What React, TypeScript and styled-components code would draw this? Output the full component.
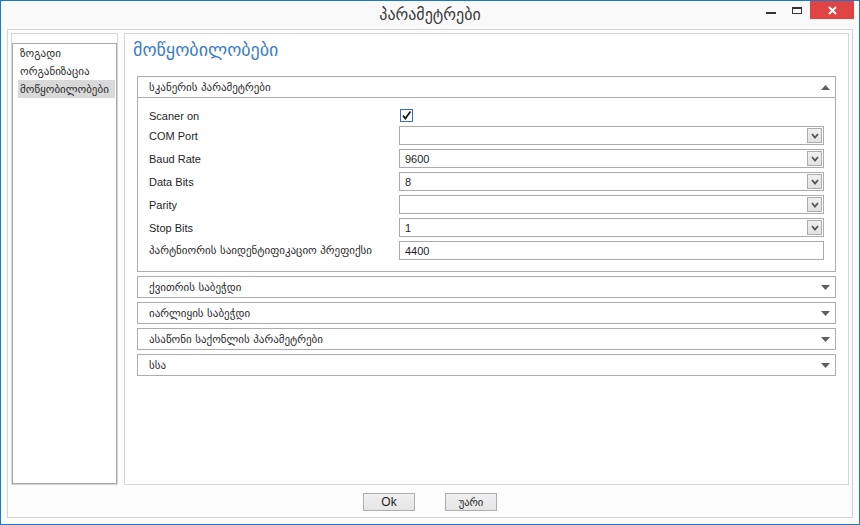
import { Fragment } from "react";
import styled, { createGlobalStyle } from "styled-components";

const GlobalStyle = createGlobalStyle`
  html, body {
    margin: 0;
    padding: 0;
    background: #ffffff;
  }
  body {
    font-family: "Liberation Sans", "DejaVu Sans", sans-serif;
    font-size: 11px;
    color: #1e1e1e;
  }
  * {
    box-sizing: border-box;
  }
`;

const Window = styled.div`
  width: 860px;
  height: 525px;
  display: flex;
  flex-direction: column;
  border: 1px solid #1c79c9;
  background: #fbfbfc;
`;

const TitleBar = styled.div`
  flex: none;
  height: 28px;
  display: grid;
  grid-template-columns: 1fr auto 1fr;
  align-items: start;
  background: #f9f9f9;
`;

const TitleText = styled.div`
  grid-column: 2;
  padding-top: 4px;
  font-family: "DejaVu Sans", sans-serif;
  font-size: 16px;
  color: #3a3a3a;
`;

const Controls = styled.div`
  grid-column: 3;
  justify-self: end;
  display: flex;
  padding-right: 5px;
`;

const ControlButton = styled.div<{ $close?: boolean }>`
  width: ${({ $close }) => ($close ? "44px" : "26px")};
  height: 18px;
  display: flex;
  align-items: center;
  justify-content: center;
  background: ${({ $close }) => ($close ? "#e04343" : "transparent")};
`;

const Frame = styled.div`
  flex: 1;
  display: flex;
  flex-direction: column;
  margin: 0 6px 6px;
  padding: 3px 3px 0;
  border: 1px solid #d5d5d5;
  background: #fdfdfd;
`;

const Panels = styled.div`
  flex: none;
  height: 452px;
  display: flex;
  gap: 6px;
`;

const SidePanel = styled.div`
  width: 107px;
  display: flex;
  flex-direction: column;
  padding-top: 9px;
  border: 1px solid #d5d5d5;
  background: #ffffff;
`;

const ListBox = styled.div`
  flex: 1;
  display: flex;
  flex-direction: column;
  padding: 0 1px 0 5px;
  border: 1px solid #a9a9a9;
  background: #ffffff;
`;

const ListItem = styled.div<{ $selected?: boolean }>`
  height: 18px;
  display: flex;
  align-items: center;
  padding-left: 2px;
  font-family: "DejaVu Sans", sans-serif;
  font-size: 11px;
  color: #2a2a2a;
  white-space: nowrap;
  background: ${({ $selected }) => ($selected ? "#d9d9d9" : "transparent")};
`;

const MainPanel = styled.div`
  flex: 1;
  display: flex;
  flex-direction: column;
  border: 1px solid #d5d5d5;
  background: #ffffff;
`;

const PageTitle = styled.div`
  height: 42px;
  padding: 5px 0 0 8px;
  font-family: "DejaVu Sans", sans-serif;
  font-size: 18px;
  color: #3b7dc4;
`;

const Sections = styled.div`
  display: flex;
  flex-direction: column;
  gap: 4px;
  padding: 0 12px;
`;

const Section = styled.div`
  border: 1px solid #acacac;
  background: #ffffff;
`;

const SectionHeader = styled.div<{ $open?: boolean }>`
  height: ${({ $open }) => ($open ? "21px" : "20px")};
  display: flex;
  align-items: center;
  justify-content: space-between;
  padding: 0 5px 0 11px;
  border-bottom: ${({ $open }) => ($open ? "1px solid #acacac" : "none")};
  font-family: "DejaVu Sans", sans-serif;
  font-size: 11px;
  color: #2a2a2a;
`;

const SectionBody = styled.div`
  display: grid;
  grid-template-columns: 250px 1fr;
  grid-template-rows: 13px repeat(6, 19px);
  row-gap: 4px;
  padding: 11px;
`;

const FieldLabel = styled.div<{ $georgian?: boolean }>`
  display: flex;
  align-items: center;
  font-family: ${({ $georgian }) =>
    $georgian ? '"DejaVu Sans", sans-serif' : '"Liberation Sans", sans-serif'};
  font-size: 11px;
  color: ${({ $georgian }) => ($georgian ? "#2a2a2a" : "#1e1e1e")};
  white-space: nowrap;
`;

const CheckBox = styled.div`
  width: 13px;
  height: 13px;
  margin-left: 1px;
  display: flex;
  align-items: center;
  justify-content: center;
  border: 1px solid #3572b8;
  background: #ffffff;
`;

const Field = styled.div`
  height: 19px;
  display: flex;
  align-items: center;
  padding: 0 1px 0 5px;
  border: 1px solid #ababab;
  background: #ffffff;
  font-family: "Liberation Sans", sans-serif;
  font-size: 11px;
  color: #1e1e1e;
`;

const FieldValue = styled.span`
  flex: 1;
`;

const DropButton = styled.div`
  width: 15px;
  height: 15px;
  display: flex;
  align-items: center;
  justify-content: center;
  border: 1px solid #acacac;
  background: linear-gradient(#efefef, #e2e2e2);
`;

const Footer = styled.div`
  flex: 1;
  display: flex;
  justify-content: center;
  align-items: flex-start;
  gap: 30px;
  padding-top: 8px;
`;

const DialogButton = styled.div<{ $georgian?: boolean }>`
  width: 52px;
  height: 18px;
  display: flex;
  align-items: center;
  justify-content: center;
  border: 1px solid #adadad;
  background: linear-gradient(#f0f0f0, #e5e5e5);
  font-family: ${({ $georgian }) =>
    $georgian ? '"DejaVu Sans", sans-serif' : '"Liberation Sans", sans-serif'};
  font-size: ${({ $georgian }) => ($georgian ? "10.5px" : "12px")};
  color: #1e1e1e;
`;

const ArrowUp = () => (
  <svg width="9" height="5" viewBox="0 0 9 5">
    <polygon points="0,5 4.5,0 9,5" fill="#5f5f5f" />
  </svg>
);

const ArrowDown = () => (
  <svg width="9" height="5" viewBox="0 0 9 5">
    <polygon points="0,0 9,0 4.5,5" fill="#5f5f5f" />
  </svg>
);

const Chevron = () => (
  <svg width="8" height="6" viewBox="0 0 8 6">
    <polyline points="1,1 4,4.5 7,1" fill="none" stroke="#555555" strokeWidth="1.8" />
  </svg>
);

const Check = () => (
  <svg width="11" height="11" viewBox="0 0 11 11">
    <polyline points="2,5.5 4.3,8.5 9.5,1.5" fill="none" stroke="#111111" strokeWidth="1.7" />
  </svg>
);

const fields = [
  { label: "COM Port", value: "" },
  { label: "Baud Rate", value: "9600" },
  { label: "Data Bits", value: "8" },
  { label: "Parity", value: "" },
  { label: "Stop Bits", value: "1" },
];

const collapsed = [
  "ქვითრის საბეჭდი",
  "იარლიყის საბეჭდი",
  "ასაწონი საქონლის პარამეტრები",
  "სსა",
];

const App: React.FC = () => {
  return (
    <>
      <GlobalStyle />
      <Window>
        <TitleBar>
          <TitleText>პარამეტრები</TitleText>
          <Controls>
            <ControlButton>
              <svg width="10" height="7" viewBox="0 0 10 7">
                <rect x="0" y="5" width="10" height="2" fill="#333333" />
              </svg>
            </ControlButton>
            <ControlButton>
              <svg width="10" height="7" viewBox="0 0 10 7">
                <rect x="0.5" y="0.5" width="9" height="6" fill="none" stroke="#333333" />
                <rect x="0" y="0" width="10" height="2" fill="#333333" />
              </svg>
            </ControlButton>
            <ControlButton $close>
              <svg width="9" height="9" viewBox="0 0 9 9">
                <path d="M1 1 L8 8 M8 1 L1 8" stroke="#ffffff" strokeWidth="2" />
              </svg>
            </ControlButton>
          </Controls>
        </TitleBar>
        <Frame>
          <Panels>
            <SidePanel>
              <ListBox>
                <ListItem>ზოგადი</ListItem>
                <ListItem>ორგანიზაცია</ListItem>
                <ListItem $selected>მოწყობილობები</ListItem>
              </ListBox>
            </SidePanel>
            <MainPanel>
              <PageTitle>მოწყობილობები</PageTitle>
              <Sections>
                <Section>
                  <SectionHeader $open>
                    <span>სკანერის პარამეტრები</span>
                    <ArrowUp />
                  </SectionHeader>
                  <SectionBody>
                    <FieldLabel>Scaner on</FieldLabel>
                    <div>
                      <CheckBox>
                        <Check />
                      </CheckBox>
                    </div>
                    {fields.map((f) => (
                      <Fragment key={f.label}>
                        <FieldLabel>{f.label}</FieldLabel>
                        <Field>
                          <FieldValue>{f.value}</FieldValue>
                          <DropButton>
                            <Chevron />
                          </DropButton>
                        </Field>
                      </Fragment>
                    ))}
                    <FieldLabel $georgian>პარტნიორის საიდენტიფიკაციო პრეფიქსი</FieldLabel>
                    <Field>
                      <FieldValue>4400</FieldValue>
                    </Field>
                  </SectionBody>
                </Section>
                {collapsed.map((title) => (
                  <Section key={title}>
                    <SectionHeader>
                      <span>{title}</span>
                      <ArrowDown />
                    </SectionHeader>
                  </Section>
                ))}
              </Sections>
            </MainPanel>
          </Panels>
          <Footer>
            <DialogButton>Ok</DialogButton>
            <DialogButton $georgian>უარი</DialogButton>
          </Footer>
        </Frame>
      </Window>
    </>
  );
};

export default App;
